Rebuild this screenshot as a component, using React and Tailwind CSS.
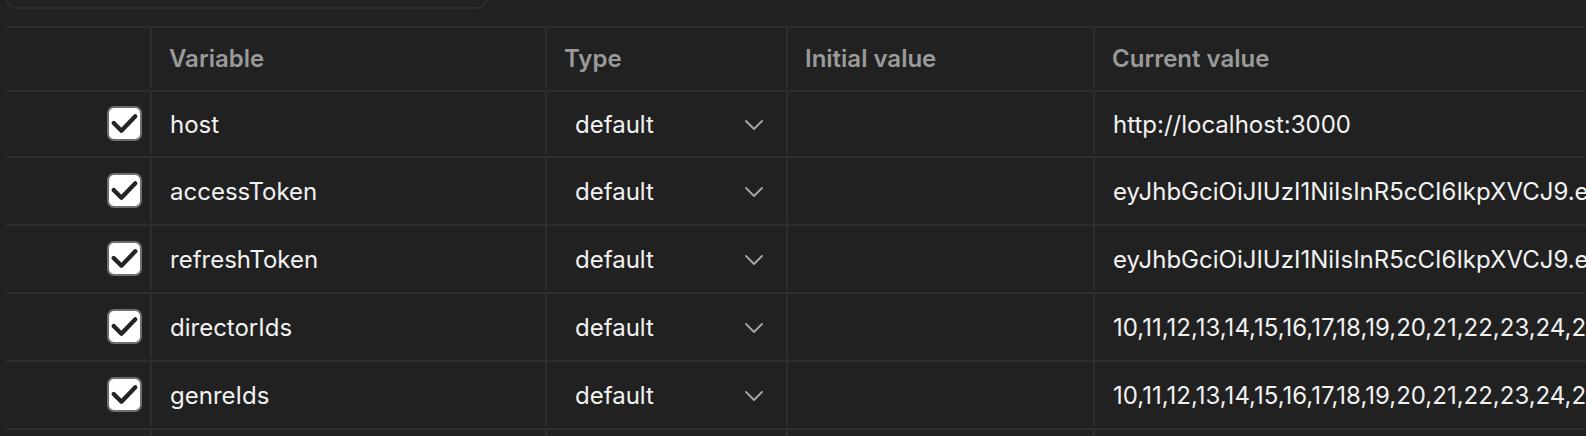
import React from "react";

const ROWS = [
  { name: "host", value: "http://localhost:3000" },
  { name: "accessToken", value: "eyJhbGciOiJIUzI1NiIsInR5cCI6IkpXVCJ9.eyJzdWIiOiIxMjM0NTY3ODkwIiwibmFtZSI6IkpvaG4gRG9lIiwiaWF0IjoxNTE2MjM5MDIyfQ" },
  { name: "refreshToken", value: "eyJhbGciOiJIUzI1NiIsInR5cCI6IkpXVCJ9.eyJzdWIiOiIxMjM0NTY3ODkwIiwibmFtZSI6IkpvaG4gRG9lIiwiaWF0IjoxNTE2MjM5MDIyfQ" },
  { name: "directorIds", value: "10,11,12,13,14,15,16,17,18,19,20,21,22,23,24,25,26,27,28,29,30,31,32,33,34,35" },
  { name: "genreIds", value: "10,11,12,13,14,15,16,17,18,19,20,21,22,23,24,25,26,27,28,29,30,31,32,33,34,35" },
  { name: "movieIds", value: "1,2,3,4,5,6,7,8,9,10" },
];

function Checkbox() {
  return (
    <div className="w-[35px] h-[35px] rounded-[7px] bg-white border-2 border-[#6e6e6e] flex items-center justify-center">
      <svg width="35" height="35" viewBox="0 0 34 34" className="-m-[2px]">
        <polyline points="6.5,16.5 14,24 27.5,10" fill="none" stroke="#242424" strokeWidth="4.2" strokeLinecap="round" strokeLinejoin="round" />
      </svg>
    </div>
  );
}

function Chevron() {
  return (
    <svg width="18" height="10" viewBox="0 0 18 10">
      <polyline points="1,1 9,9 17,1" fill="none" stroke="#a8a8a8" strokeWidth="1.8" strokeLinecap="round" strokeLinejoin="round" />
    </svg>
  );
}

function Row({ row, first }) {
  return (
    <div className={`flex border-b-2 border-[#2e2e2e] pb-[2px] ${first ? "h-[66px]" : "h-[68px]"}`}>
      <div className="w-[144px] shrink-0 flex items-center justify-end pr-[8px] pt-[1px]">
        <Checkbox />
      </div>
      <div className="w-[395px] shrink-0 border-l-2 border-[#2e2e2e] flex items-center pl-[18px] pt-[3px] text-[24px] text-[#f2f2f2]">
        {row.name}
      </div>
      <div className="w-[241px] shrink-0 border-l-2 border-[#2e2e2e] flex items-center justify-between pl-[28px] pr-[23px] pt-[3px] text-[24px] text-[#f2f2f2]">
        <span>default</span>
        <Chevron />
      </div>
      <div className="w-[307px] shrink-0 border-l-2 border-[#2e2e2e]" />
      <div className="flex-1 min-w-0 border-l-2 border-[#2e2e2e] flex items-center pl-[18px] pt-[3px] text-[24px] text-[#f2f2f2] whitespace-nowrap overflow-hidden">
        {row.value}
      </div>
    </div>
  );
}

export default function App() {
  return (
    <div className="w-[1586px] h-[436px] overflow-hidden bg-[#212121] font-['Inter','Liberation_Sans',sans-serif]">
      <div className="ml-[6px] mt-[-31px] w-[481px] h-[40px] border-2 border-[#2e2e2e] rounded-[10px]" />
      <div className="ml-[6px] mt-[17px] border-t-2 border-[#2e2e2e]">
        <div className="flex h-[64px] border-b-2 border-[#2e2e2e] pb-[2px] text-[24px] font-semibold text-[#9a9a9a]">
          <div className="w-[144px] shrink-0" />
          <div className="w-[395px] shrink-0 border-l-2 border-[#2e2e2e] flex items-center pl-[17px] pt-[2px]">Variable</div>
          <div className="w-[241px] shrink-0 border-l-2 border-[#2e2e2e] flex items-center pl-[17px] pt-[2px]">Type</div>
          <div className="w-[307px] shrink-0 border-l-2 border-[#2e2e2e] flex items-center pl-[17px] pt-[2px]">Initial value</div>
          <div className="flex-1 min-w-0 border-l-2 border-[#2e2e2e] flex items-center pl-[17px] pt-[2px]">Current value</div>
        </div>
        {ROWS.map((r, i) => (
          <Row key={r.name} row={r} first={i === 0} />
        ))}
      </div>
    </div>
  );
}
